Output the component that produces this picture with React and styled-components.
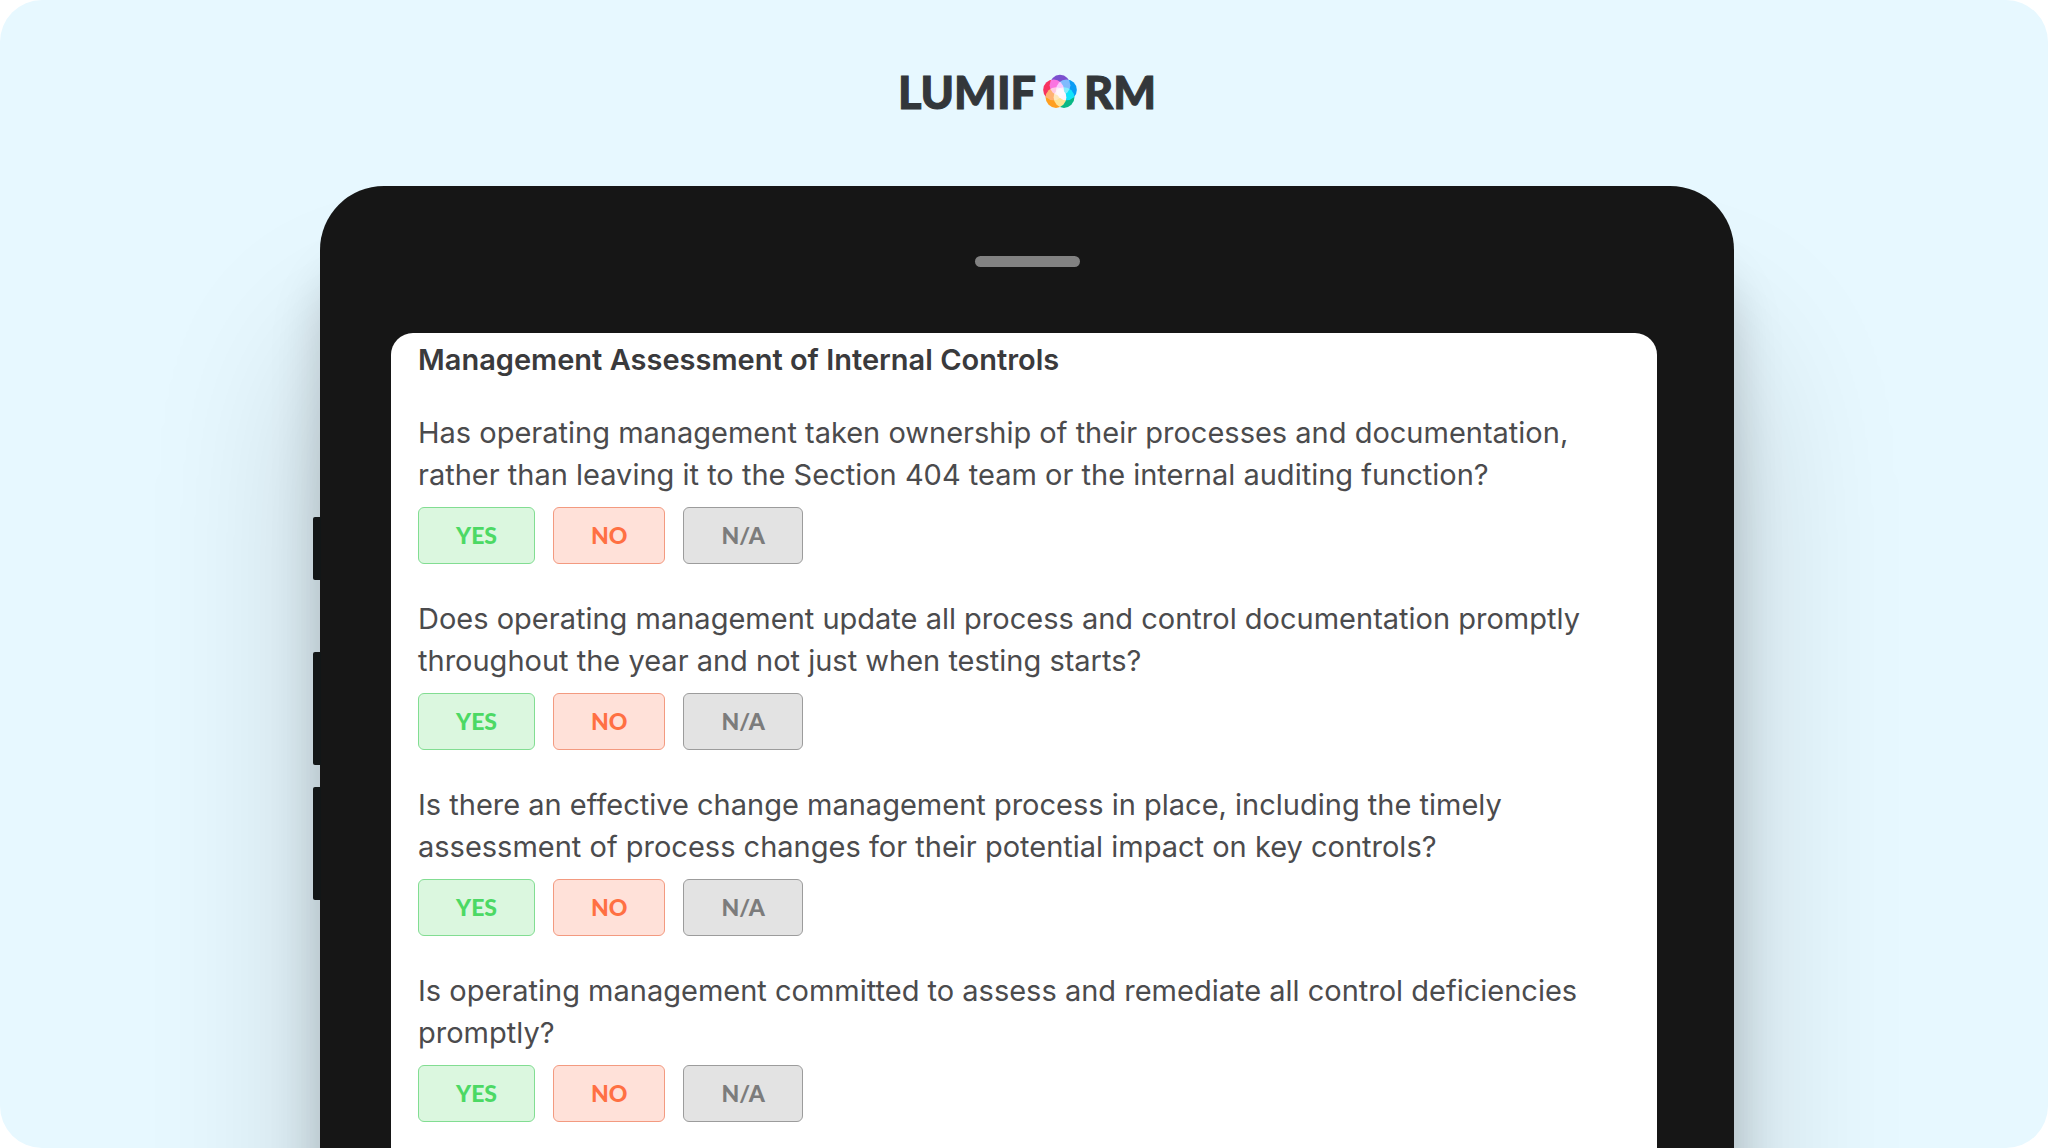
import React from "react";
import styled, { createGlobalStyle } from "styled-components";

const GlobalStyle = createGlobalStyle`
  *, *::before, *::after { box-sizing: border-box; }
  body {
    margin: 0;
    background: #ffffff;
    font-family: Inter, Roboto, sans-serif;
  }
`;

const Stage = styled.main`
  display: flex;
  flex-direction: column;
  height: 100vh;
  padding: 0 314px 0 320px;
  overflow: hidden;
  border-radius: 42px;
  background: #e7f8ff;
`;

const Header = styled.header`
  display: flex;
  flex: none;
  align-items: center;
  justify-content: center;
  height: 186px;
  padding-bottom: 2px;
`;

const Logo = styled.div`
  display: flex;
  align-items: center;
  gap: 7px;
  color: #33373a;
  font-family: Lato, "Open Sans", sans-serif;
  font-size: 45px;
  font-weight: 900;
  line-height: 48px;
  -webkit-text-stroke: 1px #33373a;
`;

const Orb = styled.svg`
  width: 34px;
  height: 36px;
  isolation: isolate;

  circle { mix-blend-mode: screen; }
`;

const Tablet = styled.section`
  position: relative;
  display: flex;
  flex: 1 0 auto;
  flex-direction: column;
  margin-bottom: -160px;
  border-radius: 64px 64px 0 0;
  background: #161616;
  box-shadow:
    0 160px 170px rgba(0, 0, 0, 0.18),
    0 80px 50px rgba(0, 0, 0, 0.18);
`;

const SideKeys = styled.div`
  position: absolute;
  top: 331px;
  left: -7px;
  display: flex;
  flex-direction: column;
`;

const SideKey = styled.span`
  width: 8px;
  height: ${(p) => p.$height}px;
  margin-bottom: ${(p) => p.$after}px;
  border-radius: 2px 0 0 2px;
  background: #121617;
`;

const Bezel = styled.div`
  display: flex;
  justify-content: center;
  height: 147px;
  padding-top: 70px;
`;

const Speaker = styled.span`
  width: 105px;
  height: 11px;
  border-radius: 6px;
  background: #828282;
`;

const Screen = styled.div`
  flex: 1;
  margin: 0 77px 0 71px;
  padding: 6px 27px 0;
  border-radius: 22px 22px 0 0;
  background: #ffffff;
`;

const Title = styled.h1`
  margin: 0 0 31px;
  color: #3a3a3c;
  font-size: 29px;
  font-weight: 600;
  line-height: 42px;
`;

const Question = styled.fieldset`
  min-width: 0;
  margin: 0 0 34px;
  padding: 0;
  border: 0;
`;

const Prompt = styled.legend`
  padding: 0 0 11px;
  color: #4b4b4d;
  font-size: 29px;
  line-height: 42px;
`;

const Answers = styled.div`
  display: flex;
  gap: 18px;
`;

const tones = {
  yes: { text: "#4cd964", line: "#82dd92", fill: "#dbf7df" },
  no: { text: "#ff7043", line: "#f39a80", fill: "#ffe1d9" },
  na: { text: "#7c7c7c", line: "#9c9c9c", fill: "#e3e3e3" },
};

const Answer = styled.button`
  height: 57px;
  padding: 0 37px 2px;
  border: 1px solid ${(p) => tones[p.$tone].line};
  border-radius: 6px;
  background: ${(p) => tones[p.$tone].fill};
  color: ${(p) => tones[p.$tone].text};
  font-family: Lato, "Open Sans", sans-serif;
  font-size: 23px;
  font-weight: 900;
  line-height: 28px;
  cursor: pointer;
`;

const questions = [
  "Has operating management taken ownership of their processes and documentation, rather than leaving it to the Section 404 team or the internal auditing function?",
  "Does operating management update all process and control documentation promptly throughout the year and not just when testing starts?",
  "Is there an effective change management process in place, including the timely assessment of process changes for their potential impact on key controls?",
  "Is operating management committed to assess and remediate all control deficiencies promptly?",
];

const answers = [
  { tone: "yes", label: "YES" },
  { tone: "no", label: "NO" },
  { tone: "na", label: "N/A" },
];

function LogoOrb() {
  return (
    <Orb viewBox="0 0 32 34" aria-hidden="true">
      <circle cx="16" cy="10.6" r="9.8" fill="#7b50cf" />
      <circle cx="22.1" cy="15" r="9.8" fill="#0a9cf5" />
      <circle cx="19.8" cy="22.2" r="9.8" fill="#08b885" />
      <circle cx="12.2" cy="22.2" r="9.8" fill="#ff9f1f" />
      <circle cx="9.9" cy="15" r="9.8" fill="#f7335f" />
    </Orb>
  );
}

export default function App() {
  return (
    <>
      <GlobalStyle />
      <Stage>
        <Header>
          <Logo>
            <span>LUMIF</span>
            <LogoOrb />
            <span>RM</span>
          </Logo>
        </Header>
        <Tablet>
          <SideKeys aria-hidden="true">
            <SideKey $height={63} $after={72} />
            <SideKey $height={113} $after={22} />
            <SideKey $height={113} $after={0} />
          </SideKeys>
          <Bezel>
            <Speaker />
          </Bezel>
          <Screen>
            <Title>Management Assessment of Internal Controls</Title>
            {questions.map((question) => (
              <Question key={question}>
                <Prompt>{question}</Prompt>
                <Answers>
                  {answers.map(({ tone, label }) => (
                    <Answer key={tone} type="button" $tone={tone}>
                      {label}
                    </Answer>
                  ))}
                </Answers>
              </Question>
            ))}
          </Screen>
        </Tablet>
      </Stage>
    </>
  );
}
